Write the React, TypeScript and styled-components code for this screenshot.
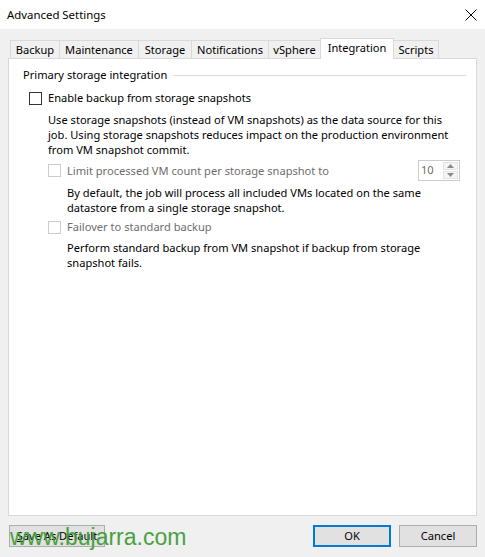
import React from "react";
import styled, { createGlobalStyle } from "styled-components";

const GlobalStyle = createGlobalStyle`
  html, body {
    margin: 0;
    padding: 0;
    background: #f0f0f0;
  }
  body {
    font-family: "Segoe UI", "Noto Sans", "Liberation Sans", sans-serif;
    font-size: 11.1px;
    color: #000;
  }
`;

const Window = styled.div`
  position: relative;
  width: 485px;
  height: 557px;
  background: #f0f0f0;
  display: flex;
  flex-direction: column;
  overflow: hidden;
`;

const TitleBar = styled.div`
  height: 29px;
  background: #fff;
  display: flex;
  align-items: center;
  justify-content: space-between;
  padding: 0 8px 0 7px;
  box-sizing: border-box;
`;

const Title = styled.span`
  font-size: 11.4px;
  line-height: 16px;
`;

const Body = styled.div`
  flex: 1;
  display: flex;
  flex-direction: column;
  padding: 9px 8px 0 8px;
`;

const TabRow = styled.div`
  position: relative;
  z-index: 1;
  display: flex;
  align-items: flex-end;
  height: 21px;
  padding-left: 2px;
  margin-bottom: -1px;
`;

const Tab = styled.div<{ $w: number; $active?: boolean }>`
  box-sizing: border-box;
  width: ${(p) => p.$w}px;
  height: ${(p) => (p.$active ? 21 : 18)}px;
  margin-bottom: ${(p) => (p.$active ? 0 : 1)}px;
  margin-left: -1px;
  border: 1px solid #d9d9d9;
  border-bottom: none;
  background: ${(p) => (p.$active ? "#fff" : "#f0f0f0")};
  position: relative;
  z-index: ${(p) => (p.$active ? 2 : 1)};
  display: flex;
  align-items: ${(p) => (p.$active ? "flex-start" : "center")};
  padding-top: ${(p) => (p.$active ? 1 : 0)}px;
  justify-content: center;
  line-height: 16px;
  white-space: nowrap;

  &:first-child {
    margin-left: 0;
  }
`;

const Panel = styled.div`
  box-sizing: border-box;
  height: 458px;
  background: #fff;
  border: 1px solid #d9d9d9;
  padding: 8px 10px 0 14px;
  display: flex;
  flex-direction: column;
`;

const GroupHeader = styled.div`
  display: flex;
  align-items: center;
  gap: 6px;
  line-height: 16px;

  &::after {
    content: "";
    flex: 1;
    height: 1px;
    background: #dcdcdc;
  }
`;

const CheckRow = styled.div<{ $indent: number; $top: number; $disabled?: boolean }>`
  display: flex;
  align-items: center;
  min-height: 16px;
  margin-left: ${(p) => p.$indent}px;
  margin-top: ${(p) => p.$top}px;
  line-height: 16px;
  color: ${(p) => (p.$disabled ? "#6d6d6d" : "#000")};
`;

const Box = styled.span<{ $disabled?: boolean }>`
  box-sizing: border-box;
  width: 13px;
  height: 13px;
  flex: none;
  border: 1px solid ${(p) => (p.$disabled ? "#cccccc" : "#333333")};
  background: #fff;
  margin-right: 6px;
`;

const Label = styled.span`
  flex: 1;
  white-space: nowrap;
`;

const Desc = styled.p<{ $indent: number; $top: number }>`
  margin: ${(p) => p.$top}px 0 0 ${(p) => p.$indent}px;
  line-height: 15px;
  white-space: nowrap;
`;

const Spinner = styled.div`
  box-sizing: border-box;
  width: 42px;
  height: 21px;
  border: 1px solid #cccccc;
  background: #fff;
  display: flex;
  margin-right: 6px;
`;

const SpinValue = styled.span`
  flex: 1;
  color: #6d6d6d;
  padding-left: 2px;
  line-height: 18px;
`;

const SpinButtons = styled.div`
  width: 15px;
  display: flex;
  flex-direction: column;
  gap: 1px;
  padding: 1px 1px 1px 0;
`;

const SpinButton = styled.div`
  flex: 1;
  background: #f4f4f4;
  border: 1px solid #e3e3e3;
  display: flex;
  align-items: center;
  justify-content: center;
`;

const Footer = styled.div`
  display: flex;
  align-items: center;
  margin-top: 9px;
  padding-left: 1px;
  gap: 8px;
`;

const Button = styled.button<{ $w: number; $default?: boolean }>`
  box-sizing: border-box;
  width: ${(p) => p.$w}px;
  height: 22px;
  padding: 0;
  font: inherit;
  color: #000;
  background: #e1e1e1;
  border: ${(p) => (p.$default ? "2px solid #0078d7" : "1px solid #adadad")};
  line-height: 16px;
`;

const Spacer = styled.div`
  flex: 1;
`;

const Watermark = styled.div`
  position: absolute;
  left: 10px;
  top: 525px;
  font-family: "Liberation Sans", Arial, sans-serif;
  font-size: 23px;
  line-height: 24px;
  color: #3d9b32;
  opacity: 0.92;
  pointer-events: none;
`;

const tabs = [
  { name: "Backup", w: 50 },
  { name: "Maintenance", w: 80 },
  { name: "Storage", w: 54 },
  { name: "Notifications", w: 78 },
  { name: "vSphere", w: 53 },
  { name: "Integration", w: 74, active: true },
  { name: "Scripts", w: 46 },
];

const Arrow = ({ up }: { up?: boolean }) => (
  <svg width="7" height="4" viewBox="0 0 7 4">
    <path d={up ? "M0 4 L3.5 0 L7 4 Z" : "M0 0 L3.5 4 L7 0 Z"} fill="#8a8a8a" />
  </svg>
);

export default function App() {
  return (
    <Window>
      <GlobalStyle />
      <TitleBar>
        <Title>Advanced Settings</Title>
        <svg width="12" height="12" viewBox="0 0 12 12">
          <path d="M0.5 0.5 L11.5 11.5 M11.5 0.5 L0.5 11.5" stroke="#000" strokeWidth="1" />
        </svg>
      </TitleBar>
      <Body>
        <TabRow>
          {tabs.map((t) => (
            <Tab key={t.name} $w={t.w} $active={t.active}>
              {t.name}
            </Tab>
          ))}
        </TabRow>
        <Panel>
          <GroupHeader>Primary storage integration</GroupHeader>
          <CheckRow $indent={6} $top={7}>
            <Box />
            <Label>Enable backup from storage snapshots</Label>
          </CheckRow>
          <Desc $indent={25} $top={6}>
            Use storage snapshots (instead of VM snapshots) as the data source for this
            <br />
            job. Using storage snapshots reduces impact on the production environment
            <br />
            from VM snapshot commit.
          </Desc>
          <CheckRow $indent={25} $top={3} $disabled>
            <Box $disabled />
            <Label>Limit processed VM count per storage snapshot to</Label>
            <Spinner>
              <SpinValue>10</SpinValue>
              <SpinButtons>
                <SpinButton>
                  <Arrow up />
                </SpinButton>
                <SpinButton>
                  <Arrow />
                </SpinButton>
              </SpinButtons>
            </Spinner>
          </CheckRow>
          <Desc $indent={44} $top={4}>
            By default, the job will process all included VMs located on the same
            <br />
            datastore from a single storage snapshot.
          </Desc>
          <CheckRow $indent={25} $top={4} $disabled>
            <Box $disabled />
            <Label>Failover to standard backup</Label>
          </CheckRow>
          <Desc $indent={44} $top={5}>
            Perform standard backup from VM snapshot if backup from storage
            <br />
            snapshot fails.
          </Desc>
        </Panel>
        <Footer>
          <Button $w={96}>
            <u>S</u>ave As Default
          </Button>
          <Spacer />
          <Button $w={78} $default>
            OK
          </Button>
          <Button $w={78}>Cancel</Button>
        </Footer>
      </Body>
      <Watermark>www.bujarra.com</Watermark>
    </Window>
  );
}
